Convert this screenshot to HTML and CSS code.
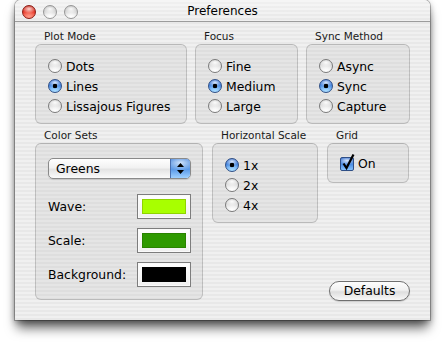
FILE: index.html
```html
<!DOCTYPE html>
<html>
<head>
<meta charset="utf-8">
<title>Preferences</title>
<link rel="stylesheet" href="styles.css">
</head>
<body>
<div class="stage">
<div class="window">
  <div class="titlebar">
    <div class="lights">
      <span class="light close"></span>
      <span class="light"></span>
      <span class="light"></span>
    </div>
    <div class="title">Preferences</div>
    <div></div>
  </div>
  <div class="content">
    <div class="row1">
      <section class="group g-plot">
        <div class="glabel">Plot Mode</div>
        <div class="gbox radios">
          <div class="radio"><span class="rb"></span>Dots</div>
          <div class="radio"><span class="rb on"></span>Lines</div>
          <div class="radio"><span class="rb"></span>Lissajous Figures</div>
        </div>
      </section>
      <section class="group g-focus">
        <div class="glabel">Focus</div>
        <div class="gbox radios">
          <div class="radio"><span class="rb"></span>Fine</div>
          <div class="radio"><span class="rb on"></span>Medium</div>
          <div class="radio"><span class="rb"></span>Large</div>
        </div>
      </section>
      <section class="group g-sync">
        <div class="glabel">Sync Method</div>
        <div class="gbox radios">
          <div class="radio"><span class="rb"></span>Async</div>
          <div class="radio"><span class="rb on"></span>Sync</div>
          <div class="radio"><span class="rb"></span>Capture</div>
        </div>
      </section>
    </div>
    <div class="row2">
      <section class="group g-colors">
        <div class="glabel">Color Sets</div>
        <div class="gbox colors">
          <div class="popup">
            <span class="popup-text">Greens</span>
            <span class="stepper">
              <svg width="9" height="13" viewBox="0 0 9 13"><path d="M4.5 1 L8 5 L1 5 Z M1 8 L8 8 L4.5 12 Z" fill="#000"/></svg>
            </span>
          </div>
          <div class="crow"><span>Wave:</span><span class="well"><span class="swatch sw-wave"></span></span></div>
          <div class="crow"><span>Scale:</span><span class="well"><span class="swatch sw-scale"></span></span></div>
          <div class="crow"><span>Background:</span><span class="well"><span class="swatch sw-bg"></span></span></div>
        </div>
      </section>
      <section class="group g-hscale">
        <div class="glabel">Horizontal Scale</div>
        <div class="gbox radios">
          <div class="radio"><span class="rb on"></span>1x</div>
          <div class="radio"><span class="rb"></span>2x</div>
          <div class="radio"><span class="rb"></span>4x</div>
        </div>
      </section>
      <section class="group g-grid">
        <div class="glabel">Grid</div>
        <div class="gbox gridbox">
          <div class="check">
            <span class="cb">
              <svg class="tick" width="16" height="18" viewBox="0 0 16 18"><path d="M3.5 10.5 L6.5 15 L13.5 1.5" fill="none" stroke="#000" stroke-width="2.2" stroke-linecap="butt" stroke-linejoin="miter"/></svg>
            </span>On
          </div>
        </div>
      </section>
      <div class="btn">Defaults</div>
    </div>
  </div>
</div>
</div>
</body>
</html>
```

FILE: styles.css
```css
* { box-sizing: border-box; }
html, body { margin: 0; background: #ffffff; }
body {
  font-family: "DejaVu Sans", "Liberation Sans", sans-serif;
  font-size: 12.4px;
  color: #000;
}
.stage { width: 445px; height: 344px; padding-left: 15px; }
.window {
  width: 415px;
  height: 320px;
  border-radius: 6px 6px 0 0;
  background: repeating-linear-gradient(to bottom, #f0f0f0 0px, #f0f0f0 2px, #e8e8e8 2px, #e8e8e8 4px);
  box-shadow: 0 0 0 1px rgba(0,0,0,0.25), 0 10px 12px -2px rgba(0,0,0,0.6), 0 2px 6px rgba(0,0,0,0.35);
  display: flex;
  flex-direction: column;
}
.titlebar {
  height: 22px;
  border-bottom: 1px solid #9c9c9c;
  display: grid;
  grid-template-columns: 1fr auto 1fr;
  align-items: center;
  border-radius: 6px 6px 0 0;
  background: linear-gradient(rgba(255,255,255,0.35), rgba(255,255,255,0));
}
.lights { display: flex; gap: 7px; padding-left: 7px; padding-top: 2px; }
.light {
  width: 14px; height: 14px; border-radius: 50%;
  border: 1px solid #969696;
  background:
    radial-gradient(ellipse 60% 35% at 50% 25%, rgba(255,255,255,0.95), rgba(255,255,255,0) 100%),
    radial-gradient(circle at 50% 90%, #ffffff 0, rgba(255,255,255,0) 60%),
    linear-gradient(#b4b4b4, #d8d8d8 55%, #f2f2f2);
}
.light.close {
  border-color: #8a1c14;
  background:
    radial-gradient(ellipse 60% 35% at 50% 25%, rgba(255,225,220,0.95), rgba(255,200,190,0) 100%),
    radial-gradient(circle at 50% 90%, #ff9a88 0, rgba(255,120,100,0) 60%),
    linear-gradient(#c0180c, #e8392a 55%, #f86a56);
}
.title { font-size: 12px; text-align: center; padding-top: 1px; }

.content { padding: 8px 20px 0 20px; }
.glabel {
  font-size: 10.5px;
  line-height: 13px;
  height: 13px;
  padding-left: 9px;
  margin-bottom: 1px;
  color: #1a1a1a;
}
.gbox {
  border: 1px solid rgba(0,0,0,0.16);
  border-top-color: rgba(0,0,0,0.2);
  border-radius: 6px;
  background: rgba(0,0,0,0.045);
}
.row1 { display: flex; gap: 8px; }
.g-plot { width: 152px; }
.g-focus { width: 103px; }
.g-sync { width: 104px; }
.radios { padding: 11px 0 7px 12px; }
.radio { display: flex; align-items: center; gap: 4px; height: 20px; }
.rb {
  width: 14px; height: 14px; border-radius: 50%;
  border: 1px solid #7a7a7a;
  flex: none;
  background:
    radial-gradient(ellipse 55% 35% at 50% 22%, rgba(255,255,255,0.95), rgba(255,255,255,0) 100%),
    radial-gradient(circle at 50% 95%, #ffffff 0, rgba(255,255,255,0) 55%),
    linear-gradient(#c8c8c8, #e2e2e2 50%, #f6f6f6);
}
.rb.on {
  border-color: #2f4f86;
  background:
    radial-gradient(circle, #000 0, #000 2px, rgba(0,0,0,0) 2.6px),
    radial-gradient(ellipse 55% 35% at 50% 22%, rgba(235,245,255,0.9), rgba(255,255,255,0) 100%),
    radial-gradient(circle at 50% 95%, #a8dcff 0, rgba(160,220,255,0) 60%),
    linear-gradient(#2a63c8, #4f90e6 55%, #86c4ff);
}

.row2 {
  margin-top: 5px;
  display: grid;
  grid-template-columns: 168px 106px 82px;
  grid-template-rows: auto 77px;
  column-gap: 9px;
}
.g-colors { grid-row: 1 / 3; grid-column: 1; }
.g-hscale { grid-row: 1; grid-column: 2; }
.g-grid { grid-row: 1; grid-column: 3; align-self: start; }
.colors { height: 157px; padding: 14px 11px 0 12px; }
.popup {
  height: 21px;
  border: 1px solid #8a8a8a;
  border-radius: 5px;
  display: flex;
  align-items: stretch;
  background: linear-gradient(#ffffff, #f2f2f2 45%, #e4e4e4 55%, #fbfbfb);
  box-shadow: 0 1px 1px rgba(0,0,0,0.12);
  overflow: hidden;
}
.popup-text { flex: 1; padding-left: 7px; line-height: 19px; }
.stepper {
  width: 20px;
  border-left: 1px solid #4a6fae;
  display: flex; align-items: center; justify-content: center;
  background:
    radial-gradient(ellipse 80% 40% at 50% 20%, rgba(230,242,255,0.85), rgba(255,255,255,0) 100%),
    linear-gradient(#3f7fd8, #5b9ae8 55%, #9ed0ff);
}
.crow {
  display: flex; justify-content: space-between; align-items: center;
  height: 25px; margin-top: 9px;
}
.popup + .crow { margin-top: 15px; }
.well {
  width: 54px; height: 25px;
  border: 1px solid #7d7d7d;
  background: linear-gradient(#ffffff, #f0f0f0);
  padding: 4px;
  box-shadow: inset 0 0 0 1px #fafafa;
}
.swatch { display: block; width: 100%; height: 100%; }
.sw-wave { background: #a8ff00; border: 1px solid #8fd400; }
.sw-scale { background: #2f9a00; border: 1px solid #2a8300; }
.sw-bg { background: #000; }

.gridbox { height: 40px; padding: 0 0 0 12px; display: flex; align-items: center; }
.check { display: flex; align-items: center; gap: 4px; padding-top: 1px; }
.cb {
  position: relative;
  width: 14px; height: 14px;
  border: 1px solid #2f4f86;
  border-radius: 2px;
  background:
    radial-gradient(ellipse 70% 35% at 50% 22%, rgba(235,245,255,0.9), rgba(255,255,255,0) 100%),
    linear-gradient(#2a63c8, #4f90e6 55%, #86c4ff);
}
.tick { position: absolute; left: -1px; top: -5px; }

.btn {
  grid-row: 2; grid-column: 2 / 4;
  justify-self: end; align-self: end;
  width: 81px; height: 20px;
  margin-right: -1px;
  margin-bottom: -1px;
  border: 1px solid #6f6f6f;
  border-radius: 10px;
  text-align: center;
  line-height: 18px;
  background: linear-gradient(#fdfdfd, #f1f1f1 45%, #dedede 55%, #f8f8f8);
  box-shadow: 0 1px 1px rgba(0,0,0,0.15);
}
```
